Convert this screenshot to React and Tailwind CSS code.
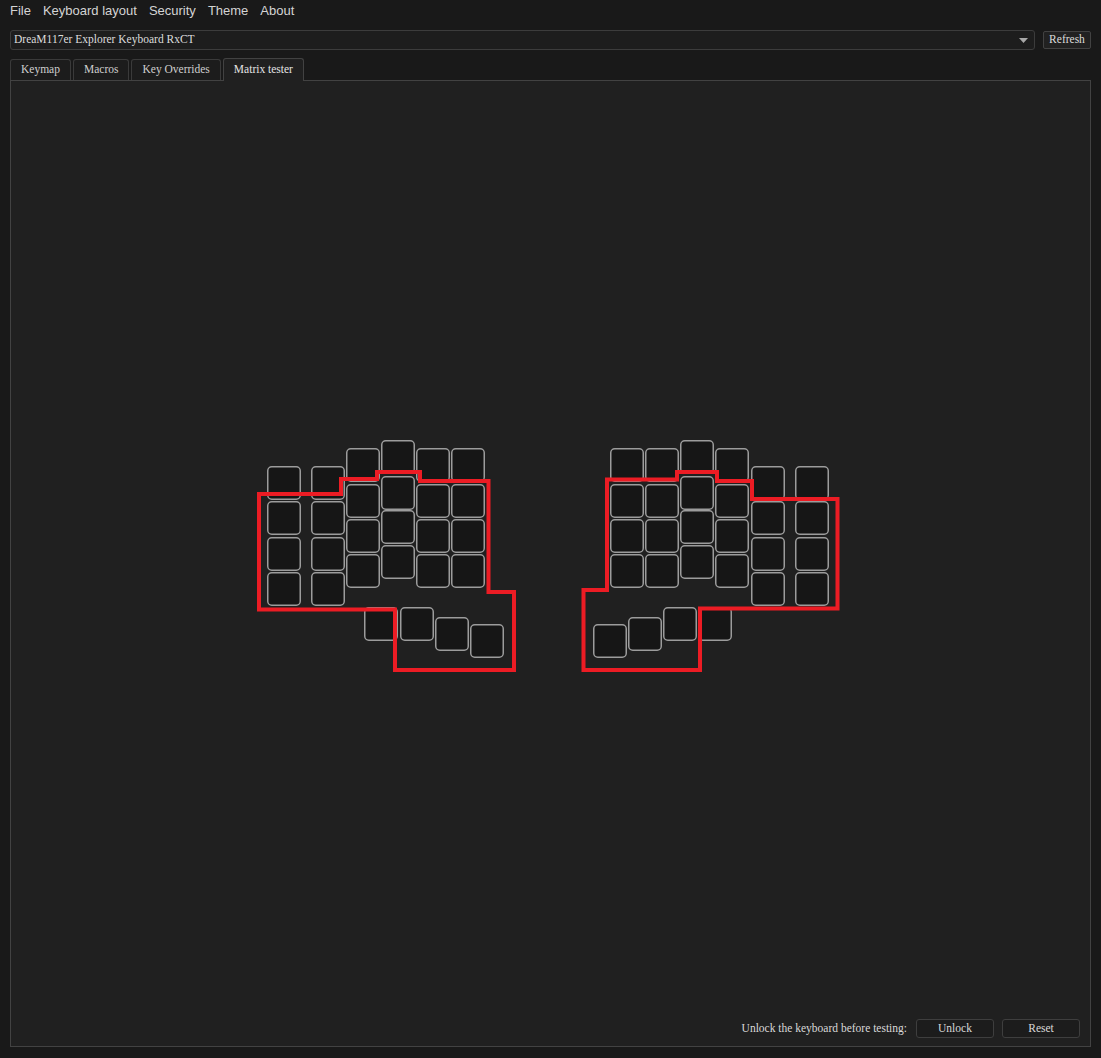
import React from 'react';

const serif = { fontFamily: '"Liberation Serif", "Times New Roman", serif' };

const LEFT_COLS = [
  { x: 267, ys: [466, 501, 537, 572] },
  { x: 311, ys: [466, 501, 537, 572] },
  { x: 346, ys: [448, 484, 519, 554] },
  { x: 381, ys: [440, 476, 510, 545] },
  { x: 416, ys: [448, 484, 519, 554] },
  { x: 451, ys: [448, 484, 519, 554] },
];
const LEFT_THUMBS = [
  [364, 607],
  [400, 607],
  [435, 617],
  [470, 624],
];

const RIGHT_COLS = [
  { x: 610, ys: [448, 484, 519, 554] },
  { x: 645, ys: [448, 484, 519, 554] },
  { x: 680, ys: [440, 476, 510, 545] },
  { x: 715, ys: [448, 484, 519, 554] },
  { x: 751, ys: [466, 501, 537, 572] },
  { x: 795, ys: [466, 501, 537, 572] },
];
const RIGHT_THUMBS = [
  [593, 624],
  [628, 617],
  [663, 607],
  [698, 607],
];

const keys = [
  ...LEFT_COLS.flatMap(c => c.ys.map(y => [c.x, y])),
  ...LEFT_THUMBS,
  ...RIGHT_COLS.flatMap(c => c.ys.map(y => [c.x, y])),
  ...RIGHT_THUMBS,
];

const Keyboard = () => (
  <svg width="590" height="236" viewBox="254 438 590 236" className="block">
    {keys.map(([x, y], i) => (
      <rect
        key={i}
        x={x + 0.75}
        y={y + 0.75}
        width="32.5"
        height="32.5"
        rx="4"
        fill="#161616"
        stroke="#9c9c9c"
        strokeWidth="1.5"
      />
    ))}
    <path
      d="M259 494 L341 494 L341 479 L377 479 L377 472 L420 472 L420 481 L488.5 481 L488.5 592 L514 592 L514 670 L395 670 L395 609.5 L259 609.5 Z"
      fill="none"
      stroke="#ec1c24"
      strokeWidth="4"
      strokeLinejoin="miter"
    />
    <path
      d="M607 479.5 L677 479.5 L677 472 L717 472 L717 481 L752 481 L752 499 L837.5 499 L837.5 608.5 L700 608.5 L700 670 L583.5 670 L583.5 590 L607 590 Z"
      fill="none"
      stroke="#ec1c24"
      strokeWidth="4"
      strokeLinejoin="miter"
    />
  </svg>
);

const Tab = ({ label, active }) => (
  <div
    className={
      active
        ? 'h-[23px] px-[10px] flex items-center border border-b-0 border-[#424242] rounded-t-[3px] bg-[#202020] text-[#e4e4e4] -mb-px relative z-10'
        : 'h-[21px] px-[10px] flex items-center border border-b-0 border-[#3a3a3a] rounded-t-[3px] bg-[#1c1c1c] text-[#cfcfcf]'
    }
  >
    {label}
  </div>
);

export default function App() {
  return (
    <div className="w-[1101px] h-[1058px] bg-[#191919] flex flex-col overflow-hidden">
      {/* Menu bar */}
      <div
        className="h-[21px] flex items-center gap-3 pl-[10px] text-[13px] text-[#d4d4d4]"
        style={{ fontFamily: '"Liberation Sans", Arial, sans-serif' }}
      >
        <span>File</span>
        <span>Keyboard layout</span>
        <span>Security</span>
        <span>Theme</span>
        <span>About</span>
      </div>

      {/* Device selector */}
      <div className="flex items-center pl-[10px] pr-[10px] mt-[9px] gap-[8px] text-[11.5px]" style={serif}>
        <div className="flex-1 h-[20px] border border-[#3c3c3c] rounded-[3px] bg-[#1d1d1d] flex items-center justify-between pl-[3px] pr-[6px] text-[#dcdcdc]">
          <span>DreaM117er Explorer Keyboard RxCT</span>
          <svg width="9" height="5" viewBox="0 0 9 5">
            <path d="M0 0 L9 0 L4.5 5 Z" fill="#a8a8a8" />
          </svg>
        </div>
        <div className="h-[18px] w-[48px] border border-[#424242] rounded-[2px] bg-[#212121] flex items-center justify-center text-[#dcdcdc]">
          Refresh
        </div>
      </div>

      {/* Tabs */}
      <div className="flex items-end gap-[2px] pl-[10px] mt-[8px] text-[11.5px]" style={serif}>
        <Tab label="Keymap" />
        <Tab label="Macros" />
        <Tab label="Key Overrides" />
        <Tab label="Matrix tester" active />
      </div>

      {/* Panel */}
      <div className="ml-[10px] mr-[10px] h-[967px] border border-[#424242] bg-[#202020] flex flex-col">
        <div className="ml-[243px] mt-[357px]">
          <Keyboard />
        </div>
        <div className="mt-auto flex items-center justify-end pr-[10px] pb-[8px] gap-[8px] text-[11.5px] text-[#d8d8d8]" style={serif}>
          <span className="mr-[1px]">Unlock the keyboard before testing:</span>
          <div className="w-[78px] h-[19px] border border-[#3e3e3e] rounded-[3px] bg-[#1c1c1c] flex items-center justify-center">
            Unlock
          </div>
          <div className="w-[78px] h-[19px] border border-[#3e3e3e] rounded-[3px] bg-[#1c1c1c] flex items-center justify-center">
            Reset
          </div>
        </div>
      </div>
    </div>
  );
}
